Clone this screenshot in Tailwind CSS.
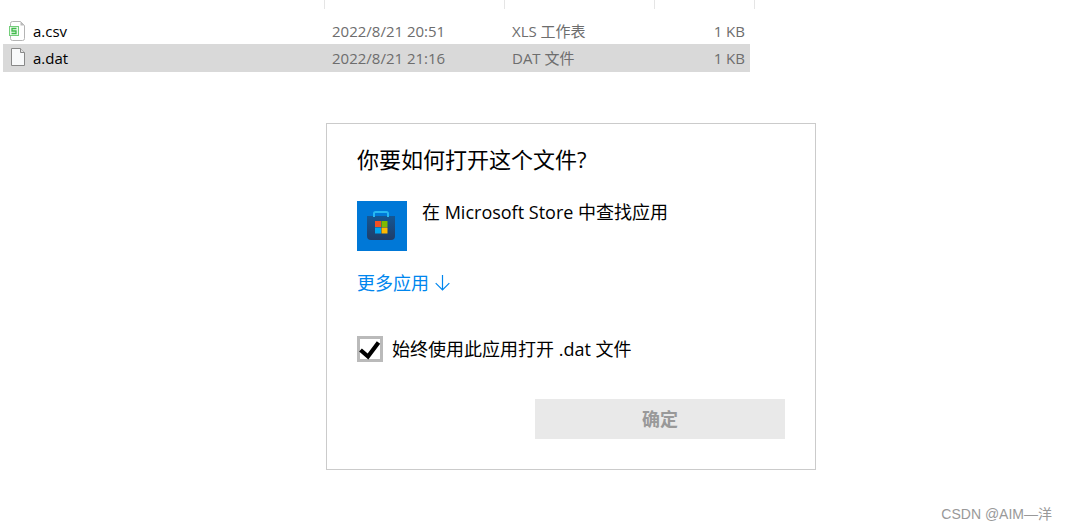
<!DOCTYPE html>
<html lang="zh-CN">
<head>
  <meta charset="UTF-8">
  <title>打开方式</title>
  <script src="https://cdn.jsdelivr.net/npm/@tailwindcss/browser@4"></script>
</head>
<body class="bg-white min-h-screen flex flex-col font-['Open_Sans','Noto_Sans_CJK_SC',sans-serif] text-black">
  <!-- column dividers -->
  <div class="flex h-[9px] pl-[3px]">
    <div class="w-[322px] border-r border-[#e5e5e5]"></div>
    <div class="w-[180px] border-r border-[#e5e5e5]"></div>
    <div class="w-[150px] border-r border-[#e5e5e5]"></div>
    <div class="w-[100px] border-r border-[#e5e5e5]"></div>
  </div>

  <table class="table-fixed w-[747px] ml-[3px] mt-2 text-[15px] leading-5 text-[#6d6d6d]">
    <colgroup>
      <col class="w-[321px]">
      <col class="w-[180px]">
      <col class="w-[150px]">
      <col>
    </colgroup>
    <tbody>
      <tr class="h-[27px]">
        <td class="p-0">
          <div class="flex items-center gap-2 pl-1.5 text-black">
            <svg class="w-4 h-5" viewBox="0 0 16 20" fill="none">
              <path d="M1.5 2.5a2 2 0 0 1 2-2h8l4 4v13a2 2 0 0 1-2 2h-10a2 2 0 0 1-2-2z" fill="#fff" stroke="#b4b4b4"/>
              <path d="M11.5.5v4h4z" fill="#bcbcbc"/>
              <rect x="0.5" y="5.5" width="9" height="9" fill="#ecfaee" stroke="#74ce7b"/>
              <path d="M7.5 7.5H3V10h4v2.5H2.5" stroke="#3fba49" stroke-width="1.3"/>
            </svg>
            a.csv
          </div>
        </td>
        <td class="p-0 pl-2">2022/8/21 20:51</td>
        <td class="p-0 pl-2">XLS 工作表</td>
        <td class="p-0 pr-[5px] text-right">1 KB</td>
      </tr>
      <tr class="h-7 bg-[#d9d9d9]">
        <td class="p-0">
          <div class="flex items-center gap-2 pl-1.5 text-black">
            <svg class="w-4 h-5" viewBox="0 0 16 20" fill="none">
              <path d="M2.5.5h9l4 4v13h-13z" fill="#f8f9fa" stroke="#888"/>
              <path d="M11.5.5v4h4" fill="#e2e2e2" stroke="#888"/>
            </svg>
            a.dat
          </div>
        </td>
        <td class="p-0 pl-2">2022/8/21 21:16</td>
        <td class="p-0 pl-2">DAT 文件</td>
        <td class="p-0 pr-[5px] text-right">1 KB</td>
      </tr>
    </tbody>
  </table>

  <main class="mt-[51px] ml-[326px] w-full max-w-[490px] border border-[#cbcbcb] px-[30px] pt-5 pb-[30px]">
    <h1 class="text-[22px] leading-[30px]">你要如何打开这个文件?</h1>

    <button type="button" class="mt-[27px] flex items-start gap-[15px] text-left text-lg leading-[22px]">
      <svg class="size-[50px]" viewBox="0 0 50 50" fill="none">
        <defs>
          <linearGradient id="bag" x1="0" y1="0" x2="0" y2="1">
            <stop offset="0" stop-color="#145794"/>
            <stop offset="1" stop-color="#203d68"/>
          </linearGradient>
        </defs>
        <rect width="50" height="50" fill="#0078d7"/>
        <path d="M10 15h28v20a4 4 0 0 1-4 4H14a4 4 0 0 1-4-4z" fill="url(#bag)"/>
        <path d="M17 16v-3.5a1.5 1.5 0 0 1 1.5-1.5h11a1.5 1.5 0 0 1 1.5 1.500V16" stroke="#27b7f1" stroke-width="2"/>
        <path d="M18 20h6v6h-6z" fill="#f25022"/>
        <path d="M24.5 20h6v6h-6z" fill="#7fba00"/>
        <path d="M18 26.5h6v6h-6z" fill="#00a4ef"/>
        <path d="M24.5 26.5h6v6h-6z" fill="#ffb900"/>
      </svg>
      在 Microsoft Store 中查找应用
    </button>

    <a href="#" class="mt-5 flex w-fit items-center gap-1.5 text-lg leading-6 text-[#0086ee]">
      更多应用
      <svg class="w-[15px] h-4" viewBox="0 0 15 16" fill="none" stroke="currentColor" stroke-width="1.2">
        <path d="M7.5 0v15M.7 8.2L7.5 15l6.8-6.8"/>
      </svg>
    </a>

    <div class="mt-[41px] flex items-center gap-[9px]">
      <div class="grid size-[26px]">
        <input id="always" type="checkbox" checked class="peer col-start-1 row-start-1 size-[26px] appearance-none border-3 border-[#bababa] bg-white">
        <svg class="pointer-events-none col-start-1 row-start-1 hidden size-[26px] peer-checked:block" viewBox="0 0 26 26" fill="none" stroke="#000" stroke-width="4.2">
          <path d="M3.5 14l7.500 6.500L21.500 6.500"/>
        </svg>
      </div>
      <label for="always" class="text-lg leading-6">始终使用此应用打开 .dat 文件</label>
    </div>

    <button type="button" disabled class="mt-[37px] ml-auto block h-10 w-[250px] bg-[#e9e9e9] text-lg font-bold text-[#999]">确定</button>
  </main>

  <footer class="mt-auto pr-[15px] pb-1.5 text-right font-['Liberation_Sans','Noto_Sans_CJK_SC',sans-serif] text-sm leading-5 text-[#999]">CSDN @AIM—洋</footer>
</body>
</html>
